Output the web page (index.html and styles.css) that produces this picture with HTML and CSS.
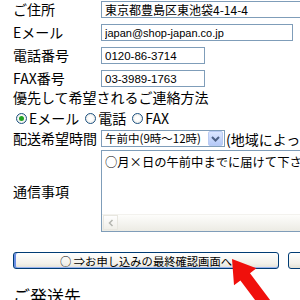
FILE: index.html
```html
<!DOCTYPE html>
<html lang="ja">
<head>
  <meta charset="UTF-8" />
  <meta name="viewport" content="width=device-width, initial-scale=1.0" />
  <title>お申し込みフォーム</title>
  <link rel="stylesheet" href="styles.css">
</head>
<body>
  <div class="form">
    <div class="row">
      <span class="label">ご住所</span>
      <input type="text" class="field field-addr" value="東京都豊島区東池袋4-14-4" />
    </div>
    <div class="row">
      <span class="label">Eメール</span>
      <input type="text" class="field field-mail" value="japan@shop-japan.co.jp" />
    </div>
    <div class="row">
      <span class="label">電話番号</span>
      <input type="text" class="field field-tel" value="0120-86-3714" />
    </div>
    <div class="row row-last">
      <span class="label">FAX番号</span>
      <input type="text" class="field field-tel" value="03-3989-1763" />
    </div>

    <div class="pref">優先して希望されるご連絡方法</div>
    <div class="radios">
      <span class="radio checked"></span><span class="opt">Eメール</span>
      <span class="radio"></span><span class="opt">電話</span>
      <span class="radio"></span><span class="opt">FAX</span>
    </div>

    <div class="row row-select">
      <span class="label">配送希望時間</span>
      <div class="select">
        <span class="select-text">午前中(9時～12時)</span>
        <span class="select-btn">
          <svg width="9" height="6" viewBox="0 0 9 6"><path d="M1 1l3.5 3.5L8 1" fill="none" stroke="#4d6185" stroke-width="2"/></svg>
        </span>
      </div>
      <span class="note">(地域によって異なります)</span>
    </div>

    <div class="row row-memo">
      <span class="label">通信事項</span>
      <div class="memo">
        <div class="memo-text">○月×日の午前中までに届けて下さい。</div>
        <div class="memo-scroll">
          <span class="scroll-btn">
            <svg width="6" height="8" viewBox="0 0 6 8"><path d="M4.5 1L1.5 4l3 3" fill="none" stroke="#b4b6b0" stroke-width="1.5"/></svg>
          </span>
        </div>
      </div>
    </div>

    <div class="buttons">
      <button class="btn btn-main">○ ⇒お申し込みの最終確認画面へ</button>
      <button class="btn btn-side">戻る</button>
    </div>

    <h2 class="section">ご発送先</h2>
  </div>

  <svg class="arrow" width="60" height="60" viewBox="0 0 60 60">
    <polygon points="12,9 36.4,18.2 30,23.2 54,55.2 44.4,62.4 20.4,30.4 14,35.2" fill="#f0100c"/>
  </svg>
</body>
</html>
```

FILE: styles.css
```css
html, body {
  overflow: hidden;
}
body {
  margin: 0;
  padding: 1px 0 0 13px;
  width: 420px;
  font-family: "Noto Sans CJK JP", sans-serif;
  font-size: 14px;
  color: #000;
  background: #fff;
}
.row {
  display: flex;
  align-items: center;
  height: 17px;
  margin-bottom: 6px;
}
.row-last {
  margin-bottom: 0;
}
.label {
  flex: none;
  width: 88px;
  line-height: 17px;
  white-space: nowrap;
}
.field {
  height: 17px;
  box-sizing: border-box;
  margin: 0;
  border: 1px solid #7f9db9;
  padding: 0 3px;
  font: 11.5px "Liberation Sans", "Noto Sans CJK JP", sans-serif;
  color: #000;
  background: #fff;
}
.field-addr {
  width: 230px;
  font-family: "Noto Sans CJK JP", sans-serif;
  font-size: 12px;
}
.field-mail {
  width: 192px;
  font-size: 11px;
}
.field-tel {
  width: 104px;
}
.pref {
  height: 20px;
  line-height: 20px;
  white-space: nowrap;
}
.radios {
  display: flex;
  align-items: center;
  height: 22px;
  margin-bottom: 1px;
  padding-left: 3px;
}
.radio {
  width: 11px;
  height: 11px;
  box-sizing: border-box;
  border: 1px solid #1c5180;
  border-radius: 50%;
  background: radial-gradient(circle, #fff 30%, #e2e2dc 100%);
  margin-right: 2px;
  position: relative;
}
.radio.checked::after {
  content: '';
  position: absolute;
  top: 2px;
  left: 2px;
  width: 5px;
  height: 5px;
  border-radius: 50%;
  background: #21a121;
}
.opt {
  margin-right: 6px;
}
.row-select {
  margin-bottom: 3px;
}
.select {
  display: flex;
  align-items: center;
  justify-content: space-between;
  width: 124px;
  height: 17px;
  box-sizing: border-box;
  border: 1px solid #7f9db9;
  padding: 0 1px 0 3px;
  background: #fff;
}
.select-text {
  font-size: 11.5px;
  line-height: 15px;
  white-space: nowrap;
}
.select-btn {
  display: flex;
  align-items: center;
  justify-content: center;
  width: 13px;
  height: 13px;
  border: 1px solid #b9cbf3;
  border-radius: 2px;
  background: linear-gradient(#dbe6ff, #b5c9f7);
}
.note {
  margin-left: 1px;
  white-space: nowrap;
}
.row-memo {
  height: 82px;
  margin-bottom: 20px;
}
.memo {
  display: flex;
  flex-direction: column;
  width: 230px;
  height: 82px;
  box-sizing: border-box;
  border: 1px solid #7f9db9;
  background: #fff;
}
.memo-text {
  flex: 1;
  padding: 3px 3px 0;
  font-size: 12.3px;
  line-height: 16px;
  white-space: nowrap;
  overflow: hidden;
}
.memo-scroll {
  height: 16px;
  background: linear-gradient(#fdfdfb, #ecebe4);
  border-top: 1px solid #f3f2ee;
}
.scroll-btn {
  display: flex;
  align-items: center;
  justify-content: center;
  width: 15px;
  height: 15px;
  box-sizing: border-box;
  margin: 0 0 0 1px;
  border: 1px solid #e8e7e0;
  background: linear-gradient(#fefefe, #f0efe9);
}
.buttons {
  display: flex;
  gap: 9px;
}
.btn {
  height: 17px;
  box-sizing: border-box;
  margin: 0;
  padding: 0;
  border: 1px solid #003c74;
  border-radius: 3px;
  background: linear-gradient(#ffffff, #f2f1ea 70%, #e3e1d6);
  box-shadow: inset 2px 0 #6b8fe5, inset 0 -1px #98b4f0;
  font: 11.3px "Noto Sans CJK JP", sans-serif;
  line-height: 14px;
  color: #000;
}
.btn-main {
  width: 266px;
}
.btn-side {
  width: 80px;
  box-shadow: none;
}
.section {
  margin: 15px 0 0;
  font-size: 17px;
  font-weight: normal;
  line-height: 24px;
}
.arrow {
  position: absolute;
  left: 220px;
  top: 250px;
  overflow: visible;
}
```
